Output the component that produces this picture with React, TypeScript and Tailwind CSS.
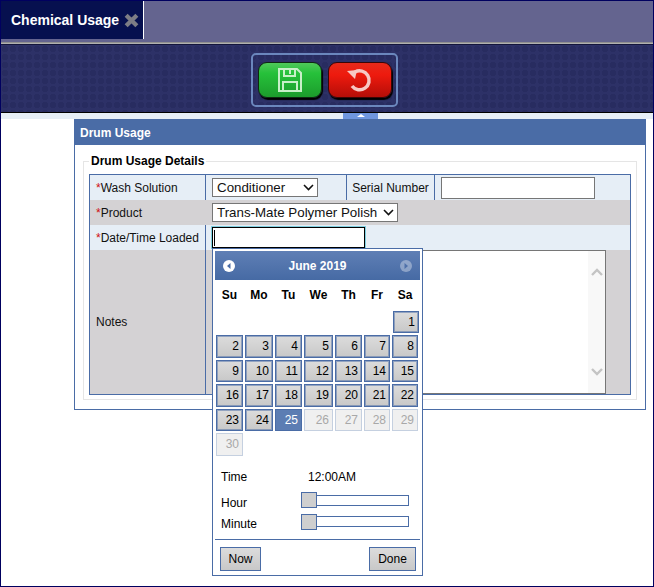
const weeks = [
  [2, 3, 4, 5, 6, 7, 8],
  [9, 10, 11, 12, 13, 14, 15],
  [16, 17, 18, 19, 20, 21, 22],
  [23, 24, 25, 26, 27, 28, 29],
  [30],
];
const dayNames = ["Su", "Mo", "Tu", "We", "Th", "Fr", "Sa"];
const colWidths = ["w-[27px]", "w-[28px]", "w-[27px]", "w-[29px]", "w-[27px]", "w-[26px]", "w-[26px]"];

function DayCell({ day, width }: { day: number; width: string }) {
  const cls =
    day === 25
      ? "border-[#4a6ca6] bg-[#5c7db3] text-white"
      : day > 25
        ? "border-[#c5d0e0] bg-[#f0f0f0] text-[#a8a8a8]"
        : "border-[#4a6ca6] bg-[linear-gradient(#dcdcdc,#c8c8c8)] text-black shadow-[inset_0_0_0_1px_rgba(74,108,166,0.5)]";
  return (
    <div className={`${width} flex h-full items-center justify-end border pr-[3px] text-[12px] ${cls}`}>{day}</div>
  );
}

function Slider({ handle }: { handle: string }) {
  return (
    <div className="relative ml-[25px] mt-[1px] h-[11px] w-[108px] border border-[#4a6ca6] bg-white">
      <div className={`absolute left-[-1px] h-[16px] w-[16px] border border-[#4a6ca6] bg-[#cfcfcf] ${handle}`} />
    </div>
  );
}

function Calendar() {
  return (
    <div className="absolute left-[211px] top-[247px] h-[328px] w-[211px] border border-[#4a6ca6] bg-white px-[2px] pt-[2px] text-black">
      <div className="flex h-[29px] items-center justify-between bg-[linear-gradient(#5f7fb5,#466aa4)] px-[8px]">
        <svg width="12" height="12" viewBox="0 0 12 12">
          <circle cx="6" cy="6" r="6" fill="#fff" />
          <path d="M7.5 3L4 6l3.5 3z" fill="#4a6ca6" />
        </svg>
        <span className="text-[12px] font-bold text-white">June 2019</span>
        <svg width="12" height="12" viewBox="0 0 12 12" opacity="0.35">
          <circle cx="6" cy="6" r="6" fill="#fff" />
          <path d="M4.5 3L8 6 4.5 9z" fill="#4a6ca6" />
        </svg>
      </div>
      <div className="mt-[6px] flex gap-[2px] px-[1px] text-[12px] font-bold">
        {dayNames.map((d, i) => (
          <div key={d} className={`${colWidths[i]} text-center`}>
            {d}
          </div>
        ))}
      </div>
      <div className="mt-[7px] flex h-[22px] justify-end pr-[1px]">
        <DayCell day={1} width="w-[26px]" />
      </div>
      <div className="mt-[2px] flex flex-col gap-[2px] px-[1px]">
        {weeks.map((w, wi) => (
          <div key={wi} className="flex h-[22.5px] gap-[2px]">
            {w.map((d, i) => (
              <DayCell key={d} day={d} width={colWidths[i]} />
            ))}
          </div>
        ))}
      </div>
      <div className="mt-[12px] flex text-[12px]">
        <span className="ml-[6px] w-[87px]">Time</span>
        <span>12:00AM</span>
      </div>
      <div className="mt-[8px] flex items-start text-[12px]">
        <span className="ml-[6px] w-[55px]">Hour</span>
        <Slider handle="top-[-4px]" />
      </div>
      <div className="mt-[3px] flex items-start text-[12px]">
        <span className="ml-[6px] w-[55px]">Minute</span>
        <Slider handle="top-[-3px]" />
      </div>
      <div className="mt-[6px] flex justify-between border-t border-[#4a6ca6] pl-[5px] pr-[4px] pt-[7px] text-[12px]">
        <div className="flex h-[24px] w-[41px] items-center justify-center border border-[#4a6ca6] bg-[linear-gradient(#dcdcdc,#c8c8c8)]">Now</div>
        <div className="flex h-[24px] w-[47px] items-center justify-center border border-[#4a6ca6] bg-[linear-gradient(#dcdcdc,#c8c8c8)]">Done</div>
      </div>
    </div>
  );
}

function Label({ children, req }: { children: string; req?: boolean }) {
  return (
    <div className="flex w-[116px] shrink-0 items-center border-r border-[#4a6ca6] pl-[6px] text-[12px]">
      {req && <span className="text-[#d01010]">*</span>}
      {children}
    </div>
  );
}

function FakeSelect({ text, width }: { text: string; width: string }) {
  return (
    <div className={`${width} flex h-[19px] items-center justify-between whitespace-nowrap border border-[#767676] bg-white pl-[4px] pr-[3px] text-[13.33px]`}>
      <span>{text}</span>
      <svg width="11" height="7" viewBox="0 0 11 7" fill="none" stroke="#111" strokeWidth="1.6">
        <path d="M1 1l4.5 4.5L10 1" />
      </svg>
    </div>
  );
}

export default function App() {
  return (
    <div className="relative h-[587px] w-[654px] overflow-hidden border border-[#00005f] bg-white font-['Liberation_Sans',Arial,sans-serif] text-[#111]">
      <div className="flex h-[38px] bg-[#64648f]">
        <div className="flex w-[143px] items-center gap-[5px] border-r border-white bg-[#06104f] pl-[10px] text-[14px] font-bold text-white">
          Chemical Usage
          <svg width="15" height="15" viewBox="0 0 14 14" stroke="#7d7d85" strokeWidth="4">
            <path d="M2 2l10 10M12 2L2 12" />
          </svg>
        </div>
      </div>
      <div className="h-[3px] bg-[#64648f]" />
      <div className="h-[1px] bg-[#8f8f8f]" />
      <div className="h-[1px] bg-[#b0b0b0]" />
      <div className="h-[1px] bg-[#14163c]" />
      <div className="flex h-[68px] border-b border-black bg-[#2d3167] bg-[radial-gradient(circle,#282c60_3px,transparent_3.5px)] bg-[length:8px_8px]">
        <div className="ml-[250px] mt-[8px] flex h-[54px] w-[147px] items-center justify-center gap-[6px] rounded-[5px] border-2 border-[#6b87bd]">
          <div className="flex h-[36px] w-[64px] items-center justify-center rounded-[9px] border border-[#0d2a10] bg-[linear-gradient(#4fc95a,#26c13a_30%,#1c9c2c)] shadow-[1px_2px_1px_#000]">
            <svg width="26" height="26" viewBox="0 0 26 26" fill="none" stroke="#c8f0c8" strokeWidth="2">
              <path d="M2 2h18l4 4v18H2z" />
              <path d="M7 2v7h11V2M13 3v4" />
              <path d="M6 24v-9h14v9" />
            </svg>
          </div>
          <div className="flex h-[36px] w-[64px] items-center justify-center rounded-[9px] border border-[#3a0505] bg-[linear-gradient(#e82a1a,#ee1a0e_35%,#b40e08)] shadow-[1px_2px_1px_#000]">
            <svg width="26" height="26" viewBox="0 0 26 26" fill="none" stroke="#f7c8c4" strokeWidth="3.5">
              <path d="M8 5A9.5 9.5 0 1 1 5 19" />
              <path d="M0 4l10-1-2 9z" fill="#f7c8c4" stroke="none" />
            </svg>
          </div>
        </div>
      </div>
      <div className="relative h-[6px] bg-[#e6eef6]">
        <div className="absolute left-[342px] top-0 flex h-[6px] w-[35px] items-start justify-center bg-[#6f96de] pt-[1px]">
          <div className="h-0 w-0 border-x-[4px] border-b-[3px] border-x-transparent border-b-white" />
        </div>
      </div>
      <div className="ml-[73px] h-[291px] w-[572px] border border-[#4a6ca6] bg-white">
        <div className="flex h-[25px] items-center bg-[#4a6ca6] pl-[5px] text-[12px] font-bold text-white">Drum Usage</div>
        <fieldset className="mx-[8px] mt-[7px] h-[248px] border border-[#e5e5e5] px-[5px]">
          <legend className="px-[2px] text-[12px] font-bold text-black">Drum Usage Details</legend>
          <div className="mt-[4px] flex h-[221px] flex-col border border-[#4a6ca6] text-[12px]">
            <div className="flex h-[25px] bg-[#e6eef6]">
              <Label req>Wash Solution</Label>
              <div className="flex w-[141px] items-center border-r border-[#4a6ca6] pl-[6px]">
                <FakeSelect text="Conditioner" width="w-[106px]" />
              </div>
              <div className="flex w-[88px] items-center justify-center border-r border-[#4a6ca6]">Serial Number</div>
              <div className="flex items-center pl-[6px]">
                <div className="h-[22px] w-[154px] border border-[#767676] bg-white" />
              </div>
            </div>
            <div className="flex h-[25px] bg-[#d4d2d4]">
              <div className="flex w-[116px] shrink-0 items-center pl-[6px]">
                <span className="text-[#d01010]">*</span>Product
              </div>
              <div className="flex items-center pl-[6px]">
                <FakeSelect text="Trans-Mate Polymer Polish" width="w-[186px]" />
              </div>
            </div>
            <div className="flex h-[25px] bg-[#e6eef6]">
              <Label req>Date/Time Loaded</Label>
              <div className="flex items-center pl-[6px]">
                <div className="flex h-[21px] w-[153px] items-center border border-black bg-white pl-[1px] shadow-[0_0_0_1px_#7fd0e0]">
                  <div className="h-[16px] w-[1px] bg-black" />
                </div>
              </div>
            </div>
            <div className="flex flex-1 bg-[#d4d2d4]">
              <Label>Notes</Label>
              <div className="flex pl-[6px]">
                <div className="flex h-[144px] w-[394px] justify-end border border-[#767676] bg-white">
                  <div className="flex w-[17px] flex-col items-center justify-between bg-[#f8f8f8] py-[17px]">
                    <svg width="12" height="8" viewBox="0 0 12 8" fill="none" stroke="#c4c4c4" strokeWidth="2.4">
                      <path d="M1 7l5-5 5 5" />
                    </svg>
                    <svg width="12" height="8" viewBox="0 0 12 8" fill="none" stroke="#c4c4c4" strokeWidth="2.4">
                      <path d="M1 1l5 5 5-5" />
                    </svg>
                  </div>
                </div>
              </div>
            </div>
          </div>
        </fieldset>
      </div>
      <Calendar />
    </div>
  );
}
